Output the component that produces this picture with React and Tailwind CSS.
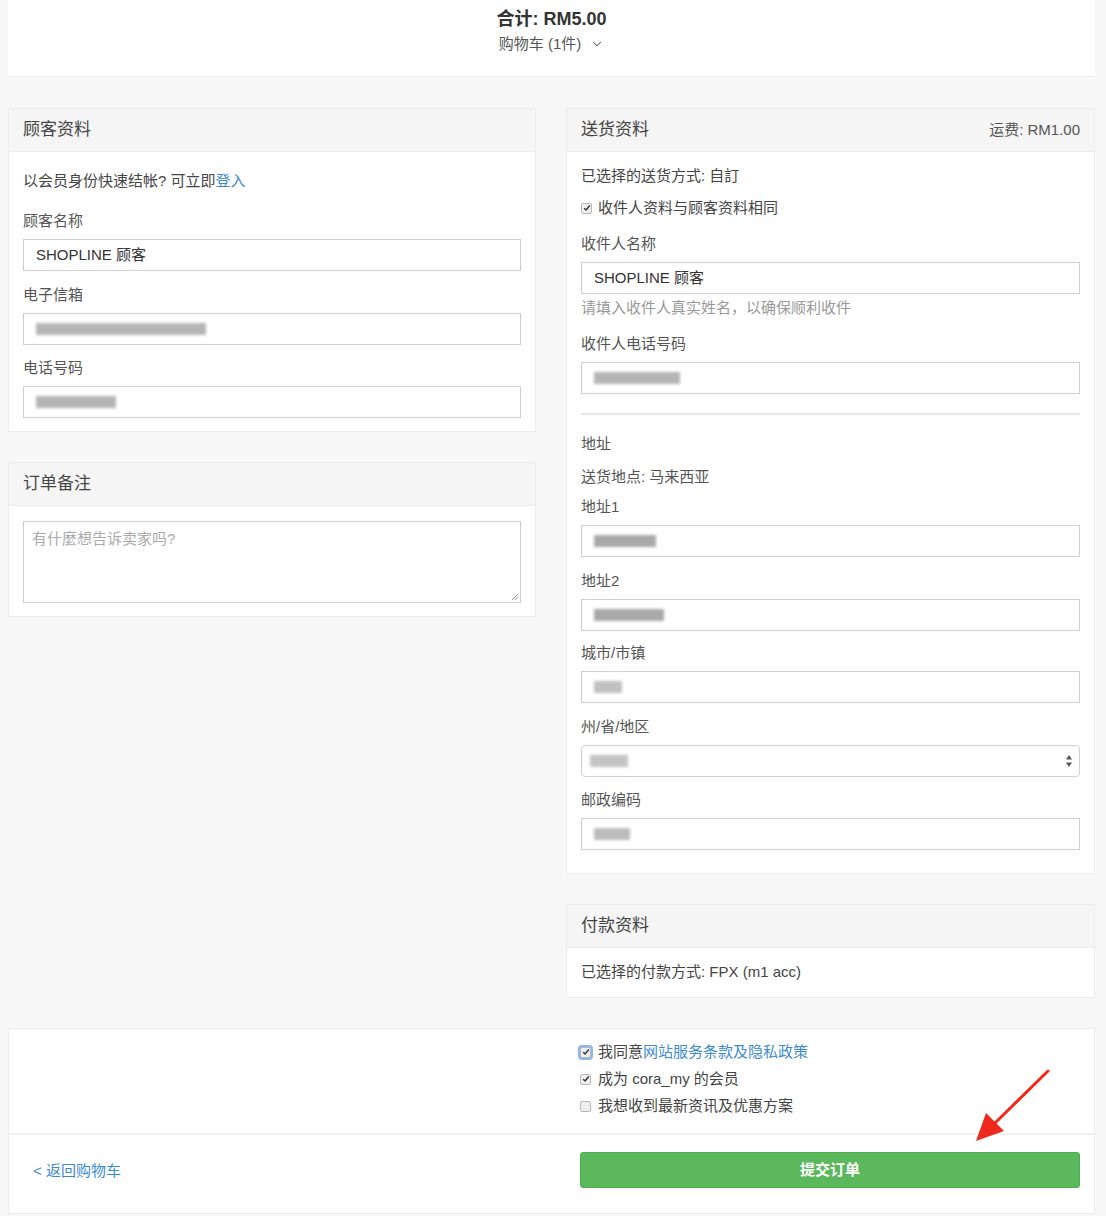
import { ChevronDown } from "lucide-react";

const Blur = ({ w, shade = "bg-[#b5b5b5]" }) => (
  <div className={`h-[12px] ${shade} blur-[1.5px]`} style={{ width: w }} />
);

const Box = ({ children, mt = "" }) => (
  <div className={`h-[32px] border border-[#cfcfcf] bg-white flex items-center px-[12px] text-[15px] text-[#333] ${mt}`}>
    {children}
  </div>
);

const Label = ({ children, className = "" }) => (
  <div className={`leading-[20px] text-[15px] text-[#555] ${className}`}>{children}</div>
);

const Check = ({ checked, focus }) => (
  <span
    className={`inline-flex items-center justify-center w-[11px] h-[11px] rounded-[2px] border border-[#b8b8b8] bg-[#efefef] ${
      focus ? "ring-2 ring-[#8fb6f0]" : ""
    }`}
  >
    {checked && (
      <svg width="8" height="8" viewBox="0 0 8 8">
        <path d="M1.2 4.2 L3.1 6 L6.8 1.6" fill="none" stroke="#333" strokeWidth="1.5" />
      </svg>
    )}
  </span>
);

const Panel = ({ title, right, children, className = "" }) => (
  <div className={`bg-white border border-[#ececec] ${className}`}>
    <div className="h-[43px] bg-[#f5f5f5] border-b border-[#ececec] px-[14px] flex items-center justify-between">
      <span className="text-[17px] text-[#444]">{title}</span>
      {right && <span className="text-[15px] text-[#555]">{right}</span>}
    </div>
    {children}
  </div>
);

export default function App() {
  return (
    <div className="min-h-[1216px] bg-[#f7f7f8] font-['Liberation_Sans','Noto_Sans_CJK_SC',sans-serif] text-[#333]">
      <div className="w-[1087px] ml-[8px]">
        {/* total summary */}
        <div className="h-[77px] bg-white border-b border-[#ececec] flex flex-col items-center pt-[8px]">
          <div className="text-[18px] font-bold leading-[22px] text-[#333]">合计: RM5.00</div>
          <div className="mt-[4px] flex items-center gap-[9px] text-[15px] text-[#555] leading-[20px]">
            购物车 (1件)
            <ChevronDown size={14} strokeWidth={1.75} />
          </div>
        </div>

        <div className="mt-[31px] flex gap-[30px] items-start">
          {/* left column */}
          <div className="w-[528px] flex flex-col gap-[30px]">
            <Panel title="顾客资料">
              <div className="px-[14px] pt-[19px] pb-[13px]">
                <div className="leading-[20px] text-[15px] text-[#444]">
                  以会员身份快速结帐? 可立即<span className="text-[#3d8bcd]">登入</span>
                </div>
                <Label className="mt-[20px]">顾客名称</Label>
                <Box mt="mt-[8px]">SHOPLINE 顾客</Box>
                <Label className="mt-[14px]">电子信箱</Label>
                <Box mt="mt-[8px]">
                  <Blur w={170} />
                </Box>
                <Label className="mt-[13px]">电话号码</Label>
                <Box mt="mt-[8px]">
                  <Blur w={80} />
                </Box>
              </div>
            </Panel>

            <Panel title="订单备注">
              <div className="px-[14px] pt-[15px] pb-[13px]">
                <div className="relative h-[82px] border border-[#cfcfcf] px-[8px] py-[6px] text-[15px] text-[#aaa]">
                  有什麼想告诉卖家吗?
                  <svg className="absolute right-[1px] bottom-[1px]" width="9" height="9" viewBox="0 0 9 9">
                    <path d="M8 2 L2 8 M8 5 L5 8" stroke="#999" strokeWidth="1" />
                  </svg>
                </div>
              </div>
            </Panel>
          </div>

          {/* right column */}
          <div className="w-[529px] flex flex-col gap-[30px]">
            <Panel title="送货资料" right="运费: RM1.00">
              <div className="px-[14px] pt-[14px] pb-[23px]">
                <div className="leading-[20px] text-[15px] text-[#444]">已选择的送货方式: 自訂</div>
                <div className="mt-[12px] flex items-center gap-[6px] leading-[20px] text-[15px] text-[#444]">
                  <Check checked />
                  收件人资料与顾客资料相同
                </div>
                <Label className="mt-[16px]">收件人名称</Label>
                <Box mt="mt-[8px]">SHOPLINE 顾客</Box>
                <div className="mt-[4px] leading-[20px] text-[15px] text-[#999]">
                  请填入收件人真实姓名，以确保顺利收件
                </div>
                <Label className="mt-[16px]">收件人电话号码</Label>
                <Box mt="mt-[8px]">
                  <Blur w={86} />
                </Box>
                <div className="mt-[19px] border-t-2 border-[#e6e6e6]" />
                <Label className="mt-[19px]">地址</Label>
                <Label className="mt-[13px]">送货地点: 马来西亚</Label>
                <Label className="mt-[10px]">地址1</Label>
                <Box mt="mt-[8px]">
                  <Blur w={62} shade="bg-[#a8a8a8]" />
                </Box>
                <Label className="mt-[14px]">地址2</Label>
                <Box mt="mt-[8px]">
                  <Blur w={70} shade="bg-[#a8a8a8]" />
                </Box>
                <Label className="mt-[12px]">城市/市镇</Label>
                <Box mt="mt-[8px]">
                  <Blur w={28} shade="bg-[#c0c0c0]" />
                </Box>
                <Label className="mt-[14px]">州/省/地区</Label>
                <div className="mt-[8px] h-[32px] border border-[#cfcfcf] rounded-[4px] bg-white flex items-center justify-between pl-[8px] pr-[6px]">
                  <Blur w={38} shade="bg-[#c4c4c4]" />
                  <svg width="8" height="14" viewBox="0 0 8 14">
                    <path d="M4 1 L7 5.5 H1 Z M4 13 L7 8.5 H1 Z" fill="#555" />
                  </svg>
                </div>
                <Label className="mt-[13px]">邮政编码</Label>
                <Box mt="mt-[8px]">
                  <Blur w={36} shade="bg-[#bcbcbc]" />
                </Box>
              </div>
            </Panel>

            <Panel title="付款资料">
              <div className="px-[14px] pt-[14px] pb-[15px] leading-[20px] text-[15px] text-[#444]">
                已选择的付款方式: FPX (m1 acc)
              </div>
            </Panel>
          </div>
        </div>

        {/* bottom actions */}
        <div className="relative mt-[30px] bg-white border border-[#ececec]">
          <div className="flex border-b-2 border-[#f0f0f0]">
            <div className="w-[558px]" />
            <div className="flex flex-col gap-[5px] pt-[12px] pb-[16px] pl-[13px] text-[15px] text-[#444] leading-[22px]">
              <div className="flex items-center gap-[7px]">
                <Check checked focus />
                <span>
                  我同意<span className="text-[#3d8bcd]">网站服务条款及隐私政策</span>
                </span>
              </div>
              <div className="flex items-center gap-[7px]">
                <Check checked />
                成为 cora_my 的会员
              </div>
              <div className="flex items-center gap-[7px]">
                <Check />
                我想收到最新资讯及优惠方案
              </div>
            </div>
          </div>
          <div className="flex items-start pt-[17px] pb-[25px]">
            <div className="w-[558px] pl-[24px] pt-[9px] text-[15px] leading-[20px] text-[#3d8bcd]">&lt; 返回购物车</div>
            <div className="ml-[13px] w-[500px] h-[36px] rounded-[3px] bg-[#5cb85c] border border-[#4cae4c] flex items-center justify-center text-white text-[15px] font-bold">
              提交订单
            </div>
          </div>
          <svg
            className="absolute left-[960px] top-[38px] pointer-events-none"
            width="90"
            height="80"
            viewBox="0 0 90 80"
          >
            <path d="M79 4 L26 56" stroke="#ee2a1e" strokeWidth="3" strokeLinecap="round" />
            <path d="M7 74 L17 46 L35 64 Z" fill="#ee2a1e" />
          </svg>
        </div>
      </div>
    </div>
  );
}
